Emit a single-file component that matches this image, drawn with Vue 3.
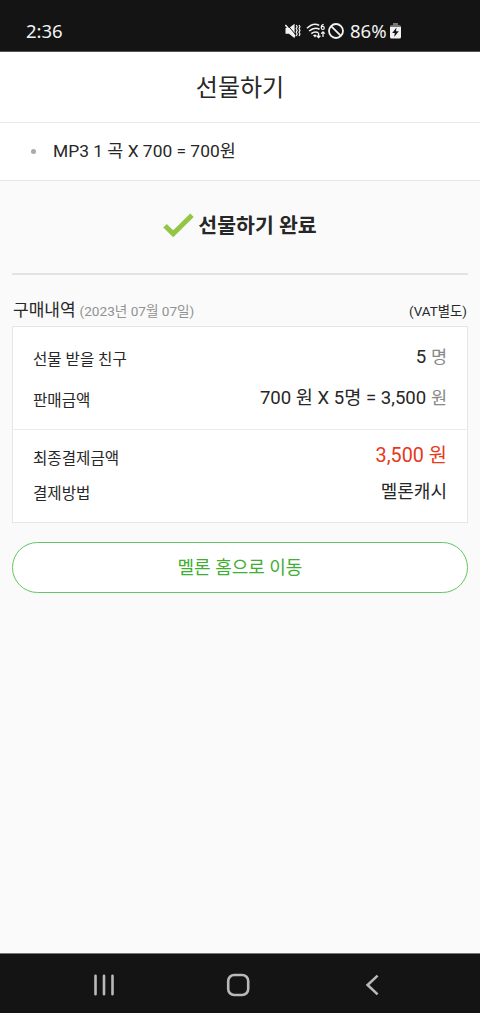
<script setup>
const purchase = [
  { label: '선물 받을 친구', value: '5', unit: '명' },
  { label: '판매금액', value: '700 원 X 5명 = 3,500', unit: '원' },
]
</script>

<template>
  <div class="screen">
    <header class="status">
      <span class="clock">2:36</span>
      <div class="indicators">
        <svg class="mute" width="17" height="16" viewBox="0 0 17 16">
          <path d="M.5 5H4L9.6 .8V15.2L4 10.8H.5Z" fill="#f2f2f2" />
          <path d="M1.6 1L11 12" stroke="#141414" stroke-width="1" />
          <path d="M.4 2L10.2 13.6" stroke="#f2f2f2" stroke-width="1.5" />
          <path d="M11.2 2L12.2 3.8L11.2 5.6L12.2 7.4L11.2 9.2L12.2 11L11.2 13M14 2L15 3.8L14 5.6L15 7.4L14 9.2L15 11L14 13" fill="none" stroke="#f2f2f2" stroke-width="1.2" />
        </svg>
        <svg class="wifi" width="20" height="16" viewBox="0 0 20 16">
          <g fill="none" stroke="#f2f2f2" stroke-width="1.6">
            <path d="M1 5.3Q7.3-.9 13.2 2.4M3.1 8Q8.4 3.5 13.6 6.3M5.3 10.6Q8.6 7.9 12.4 9.7" />
            <path d="M17.7 1.3Q15.2 1.7 15.2 4.6M12.6 10V14.6M10.8 12.8L12.6 14.6L14.4 12.8M17 14V8.8M15.2 10.6L17 8.8L18.8 10.6" stroke-width="1.3" />
            <circle cx="16.8" cy="4.9" r="1.5" stroke-width="1.2" />
          </g>
          <path d="M7 12.2Q9 11 10.8 12.2L9 14.5Z" fill="#f2f2f2" />
        </svg>
        <svg class="blocked" width="16" height="16" viewBox="0 0 16 16">
          <g fill="none" stroke="#f2f2f2" stroke-width="1.8"><circle cx="8" cy="8" r="7" /><path d="M3.1 3.1L12.9 12.9" /></g>
        </svg>
        <span class="percent">86%</span>
        <svg class="battery" width="11" height="16" viewBox="0 0 11 16">
          <path d="M3 0H8V2H9.5Q11 2 11 3.5V5H0V3.5Q0 2 1.5 2H3Z" fill="#777" />
          <path d="M0 4H11V14Q11 15.5 9.5 15.5H1.5Q0 15.5 0 14Z" fill="#f2f2f2" />
          <path d="M6.5 4.4L2.2 10H4.8L4.2 14L8.8 8.2H6Z" fill="#141414" />
        </svg>
      </div>
    </header>

    <h1 class="title">선물하기</h1>
    <div class="item"><i class="bullet"></i><span>MP3 1 곡 X 700 = 700원</span></div>

    <main class="content">
      <div class="done">
        <svg width="31" height="25" viewBox="0 0 31 25"><path d="M2 12.7L10.2 20.8L29 2.3" fill="none" stroke="#94c646" stroke-width="5" /></svg>
        <strong>선물하기 완료</strong>
      </div>

      <div class="heading">
        <h2>구매내역</h2>
        <span class="date">(2023년 07월 07일)</span>
        <span class="vat">(VAT별도)</span>
      </div>

      <section class="card">
        <div class="group">
          <div v-for="row in purchase" :key="row.label" class="row">
            <span class="label">{{ row.label }}</span>
            <span class="value">{{ row.value }} <em>{{ row.unit }}</em></span>
          </div>
        </div>
        <div class="group total">
          <div class="row">
            <span class="label">최종결제금액</span>
            <span class="value price">3,500 원</span>
          </div>
          <div class="row">
            <span class="label">결제방법</span>
            <span class="value method">멜론캐시</span>
          </div>
        </div>
      </section>

      <button class="home" type="button">멜론 홈으로 이동</button>
    </main>

    <nav class="navbar">
      <svg width="22" height="22" viewBox="0 0 22 22"><path d="M2.5 1.8V20.2M11 1.8V20.2M19.5 1.8V20.2" stroke="#b9b9b9" stroke-width="2.6" stroke-linecap="round" /></svg>
      <svg width="24" height="24" viewBox="0 0 24 24"><rect x="2.2" y="2" width="20" height="20" rx="6" fill="none" stroke="#b9b9b9" stroke-width="2.6" /></svg>
      <svg width="22" height="22" viewBox="0 0 22 22"><path d="M16.6 1.6L6.6 11L16.6 20.4" fill="none" stroke="#b9b9b9" stroke-width="2.6" /></svg>
    </nav>
  </div>
</template>

<style>
body { margin: 0; background: #fafafa; }
</style>

<style scoped>
* { box-sizing: border-box; }
.screen {
  display: flex;
  flex-direction: column;
  width: 480px;
  height: 1013px;
  overflow: hidden;
  background: #fafafa;
  color: #272727;
  font-family: Roboto, "Noto Sans CJK KR", sans-serif;
}
.status {
  display: flex;
  align-items: center;
  justify-content: space-between;
  height: 52px;
  flex: none;
  padding: 11px 79px 0 26px;
  background: #141414;
  border-bottom: 1px solid #555;
  color: #f2f2f2;
  font: 18.5px/24px "Noto Sans", sans-serif;
}
.indicators { display: flex; align-items: center; }
.wifi { margin-left: 4px; }
.blocked { margin-left: 2px; }
.percent { margin-left: 6px; width: 39px; white-space: nowrap; }
.battery { margin-left: 1px; }
.title {
  height: 71px;
  flex: none;
  margin: 0;
  padding-top: 2px;
  background: #fff;
  border-bottom: 1px solid #e9e9e9;
  font-size: 24px;
  font-weight: 400;
  line-height: 68px;
  text-align: center;
}
.item {
  display: flex;
  align-items: center;
  height: 58px;
  flex: none;
  padding: 0 0 1px 31px;
  background: #fff;
  border-bottom: 1px solid #e5e5e5;
  font-size: 17.4px;
  line-height: 24px;
}
.bullet { width: 5px; height: 5px; margin-right: 17px; border-radius: 50%; background: #aaa; }
.content { flex: 1; padding: 0 12px; }
.done {
  display: flex;
  justify-content: center;
  height: 94px;
  padding-top: 30px;
  border-bottom: 2px solid #e2e2e2;
  font-size: 20.5px;
  line-height: 30px;
}
.done svg { margin: 2px 4px 0 0; }
.heading { display: flex; align-items: baseline; height: 51px; padding: 22px 1px 0; line-height: 26px; white-space: nowrap; }
h2 { margin: 0 4px 0 0; font-size: 17px; font-weight: 400; }
.date { color: #929292; font-size: 13.6px; }
.vat { margin-left: auto; font-size: 13.4px; }
.card { height: 197px; border: 1px solid #e6e6e6; background: #fff; }
.group { display: flex; flex-direction: column; height: 103px; padding: 17px 20px 0; gap: 15px; border-bottom: 1px solid #ebebeb; }
.total { height: 92px; padding-top: 13px; gap: 9px; border-bottom: 0; }
.row { display: flex; justify-content: space-between; height: 26px; line-height: 26px; white-space: nowrap; }
.label { padding-top: 3px; font-size: 15.6px; }
.value { font-size: 18.6px; }
.value em { color: #888; font-size: 17.5px; font-style: normal; }
.price { color: #e6391c; font-size: 19.8px; }
.method { padding-top: 1px; font-size: 18px; }
.home {
  display: block;
  width: 456px;
  height: 51px;
  margin: 19px 0 0;
  padding: 0 0 4px;
  border: 1px solid #65c566;
  border-radius: 26px;
  background: #fff;
  color: #40ae32;
  font: inherit;
  font-size: 18px;
}
.navbar {
  display: flex;
  align-items: center;
  justify-content: space-between;
  height: 60px;
  flex: none;
  padding: 3px 97px 0 93px;
  background: #141414;
  border-top: 1px solid #777;
}
</style>
